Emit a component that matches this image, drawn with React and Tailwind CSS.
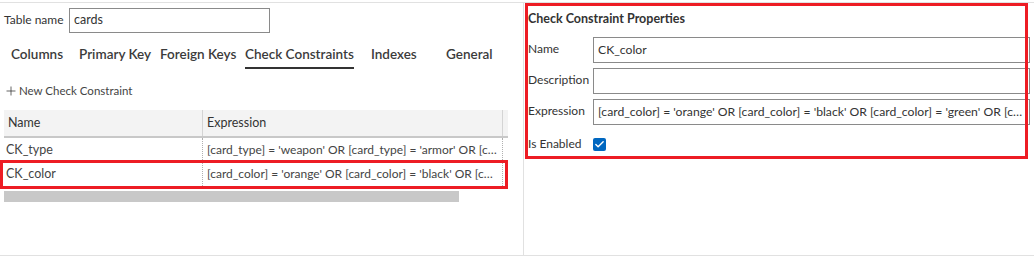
import React from 'react';
import { Plus, Check } from 'lucide-react';

const font = { fontFamily: 'Lato, "Noto Sans", sans-serif' };

const rows = [
    { name: 'CK_type', expr: "[card_type] = 'weapon' OR [card_type] = 'armor' OR [card_type] = 'accessory'" },
    { name: 'CK_color', expr: "[card_color] = 'orange' OR [card_color] = 'black' OR [card_color] = 'green'" },
];

const Field = ({ label, value }) => (
    <div className="flex items-center h-[26px]">
        <span className="w-[65px] shrink-0 text-[12px] text-[#333] -mt-[3px]">{label}</span>
        <div className="w-[437px] shrink-0 h-[26px] border border-[#8a8a8a] px-[4px] flex items-center text-[12.2px] text-[#333] overflow-hidden">
            <span className="truncate">{value}</span>
        </div>
    </div>
);

const App = () => {
    return (
        <div style={font} className="relative w-[1034px] h-[261px] bg-white overflow-hidden pt-[2px] whitespace-nowrap">
            <div className="flex h-[254px] border-t border-b border-[#e1e1e1]">
                {/* left: table designer */}
                <div className="w-[524px] shrink-0 border-r border-[#e1e1e1] pl-[4px]">
                    <div className="flex items-center mt-[5px] h-[25px]">
                        <span className="text-[12px] text-[#333] w-[65px] -mt-[2px]">Table name</span>
                        <div className="w-[201px] h-[25px] border border-[#8a8a8a] px-[4px] flex items-center text-[12.5px] text-[#333]">cards</div>
                    </div>
                    <div className="flex mt-[11px] h-[25px] text-[13.5px] font-semibold text-[#3b3b3b]">
                        <span className="ml-[7px] w-[68px]">Columns</span>
                        <span className="w-[81px]">Primary Key</span>
                        <span className="w-[85px]">Foreign Keys</span>
                        <span className="w-[126px]"><span className="inline-block border-b-2 border-[#333] pb-[3px]">Check Constraints</span></span>
                        <span className="w-[75px]">Indexes</span>
                        <span>General</span>
                    </div>
                    <div className="flex items-center mt-[15px] h-[14px] text-[11.5px] text-[#444]">
                        <Plus className="w-[14px] h-[14px] text-[#222]" strokeWidth={1.2} />
                        <span className="ml-[1px]">New Check Constraint</span>
                    </div>
                    <div className="mt-[12px] w-[504px]">
                        <div className="flex h-[28px] bg-[#f3f3f3] border-b-2 border-[#c8c8c8] text-[12.5px] text-[#333]">
                            <div className="w-[199px] border-r border-[#d4d4d4] pl-[4px] flex items-center">Name</div>
                            <div className="w-[300px] border-r border-[#d4d4d4] pl-[4px] flex items-center">Expression</div>
                        </div>
                        {rows.map((r) => (
                            <div key={r.name} className="flex h-[24px] text-[12.5px] text-[#444]">
                                <div className="w-[199px] border-r border-dotted border-[#b0b0b0] pl-[2px] flex items-center">{r.name}</div>
                                <div className="w-[300px] border-r border-dotted border-[#b0b0b0] pl-[4px] pr-[4px] flex items-center overflow-hidden text-[12px]">
                                    <span className="truncate">{r.expr}</span>
                                </div>
                            </div>
                        ))}
                        <div className="mt-[5px] w-[455px] h-[11px] bg-[#c8c8c8]" />
                    </div>
                </div>

                {/* right: properties */}
                <div className="flex-1 pl-[4px] pt-[7px]">
                    <div className="text-[12.5px] font-bold text-[#333] h-[18px]">Check Constraint Properties</div>
                    <div className="flex flex-col gap-[5px] mt-[9px]">
                        <Field label="Name" value="CK_color" />
                        <Field label="Description" value="" />
                        <Field label="Expression" value="[card_color] = 'orange' OR [card_color] = 'black' OR [card_color] = 'green' OR [card_color] = 'yellow'" />
                        <div className="flex items-center h-[24px] mt-[2px]">
                            <span className="w-[65px] shrink-0 text-[12px] text-[#333]">Is Enabled</span>
                            <span className="w-[13px] h-[13px] rounded-[2px] bg-[#0067c0] flex items-center justify-center">
                                <Check className="w-[11px] h-[11px] text-white" strokeWidth={3} />
                            </span>
                        </div>
                    </div>
                </div>
            </div>

            {/* red highlight annotations */}
            <div className="absolute left-0 top-[160px] w-[508px] h-[29px] border-[3px] border-[#ed1c24]" />
            <div className="absolute left-[525px] top-[3px] w-[503px] h-[156px] border-[3px] border-[#ed1c24]" />
        </div>
    );
};

export default App;
